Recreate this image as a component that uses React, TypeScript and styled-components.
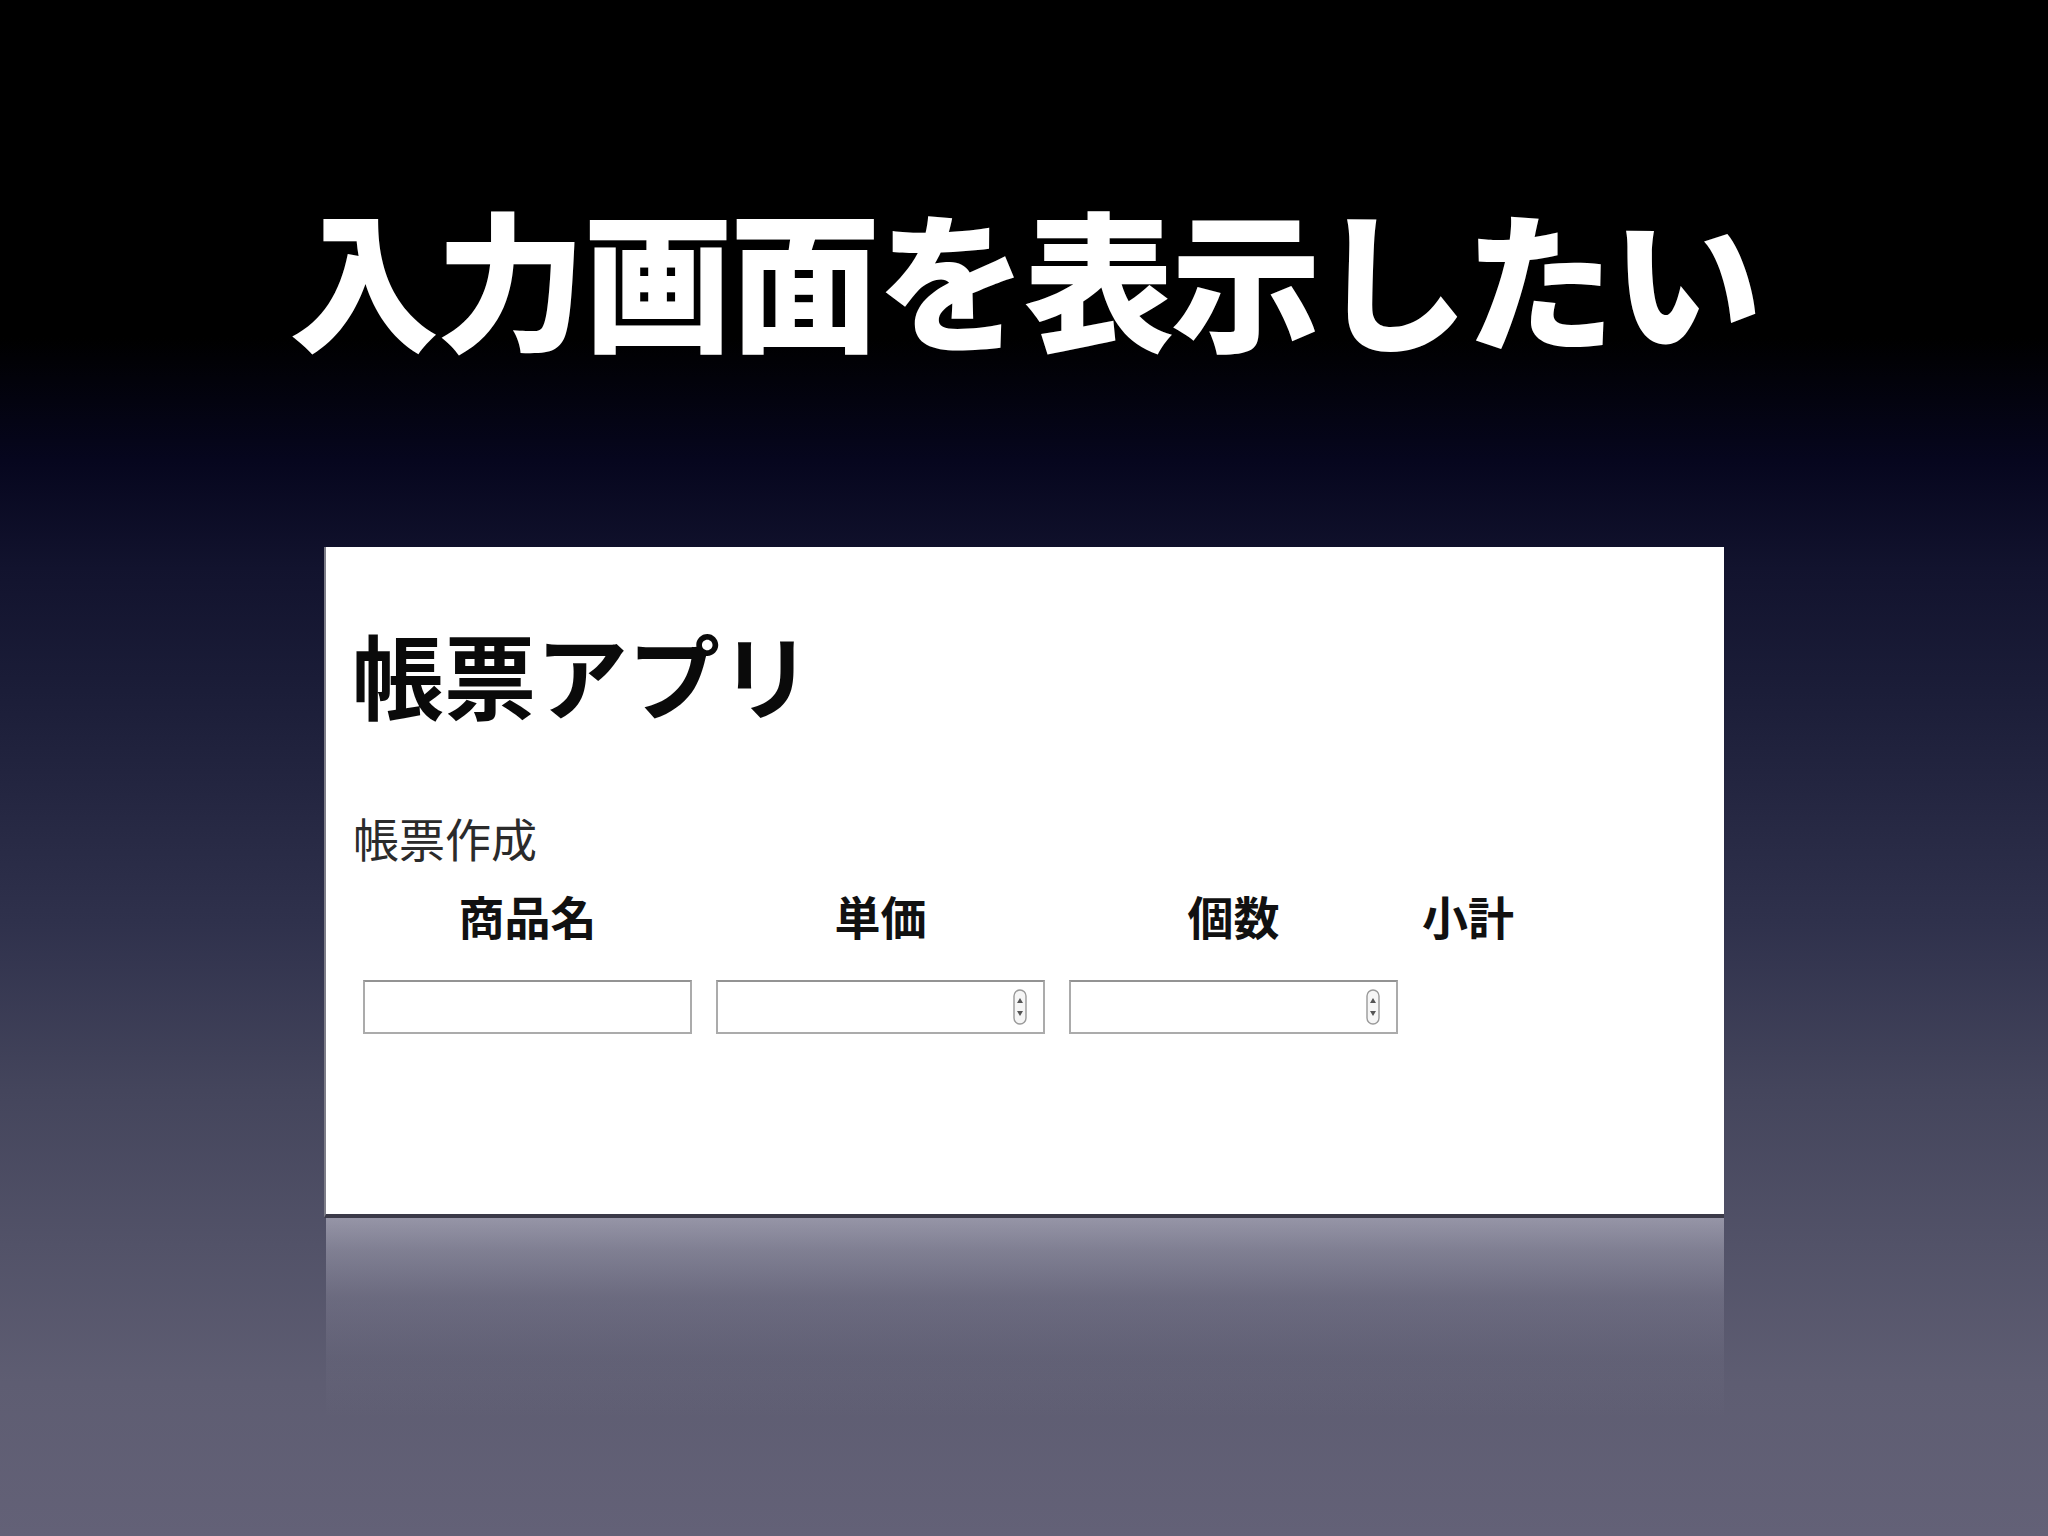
import React from "react";
import styled, { createGlobalStyle } from "styled-components";

const Global = createGlobalStyle`
  html, body {
    margin: 0;
    padding: 0;
  }
  body {
    width: 2048px;
    height: 1536px;
    overflow: hidden;
    background: linear-gradient(
      to bottom,
      #000000 0%,
      #000000 22%,
      #06061e 30%,
      #12132e 37%,
      #1b1d38 45%,
      #2f314c 60%,
      #44455c 71%,
      #525268 81%,
      #5e5d72 90%,
      #636177 100%
    );
    font-family: "Noto Sans CJK JP", "Noto Sans CJK SC", sans-serif;
  }
`;

const Slide = styled.main`
  width: 2048px;
  height: 1536px;
  display: flex;
  flex-direction: column;
  align-items: center;
`;

const Title = styled.h1`
  margin: 200px 0 0 0;
  font-size: 150px;
  line-height: 1;
  font-weight: 900;
  letter-spacing: -3px;
  color: #ffffff;
  white-space: nowrap;
`;

const Screen = styled.section`
  margin-top: 197px;
  width: 1400px;
  display: flex;
  flex-direction: column;
`;

const Page = styled.div`
  box-sizing: border-box;
  height: 671px;
  background: #ffffff;
  border-left: 2px solid #7d7d88;
  border-bottom: 4px solid #3b3a48;
  padding: 80px 0 0 26px;
  display: flex;
  flex-direction: column;
`;

const AppHeading = styled.h2`
  margin: 0;
  font-size: 92px;
  line-height: 1;
  font-weight: 700;
  color: #0a0a0a;
`;

const SubHeading = styled.div`
  margin-top: 95px;
  margin-left: 1px;
  font-size: 46px;
  line-height: 1;
  font-weight: 400;
  color: #2b2b2b;
`;

const Grid = styled.div`
  margin-top: 32px;
  padding-left: 11px;
  display: grid;
  grid-template-columns: 329px 329px 329px auto;
  column-gap: 24px;
  row-gap: 42px;
  justify-content: start;
`;

const Th = styled.div`
  text-align: center;
  font-size: 46px;
  line-height: 1;
  font-weight: 700;
  color: #111111;
`;

const FieldWrap = styled.div`
  position: relative;
  height: 54px;
`;

const Field = styled.input`
  box-sizing: border-box;
  width: 100%;
  height: 54px;
  margin: 0;
  border: 2px solid #ababab;
  border-top-color: #939393;
  background: #ffffff;
  outline: none;
  font-size: 28px;
  padding: 0 40px 0 8px;
  appearance: textfield;
  -moz-appearance: textfield;
  &::-webkit-outer-spin-button,
  &::-webkit-inner-spin-button {
    -webkit-appearance: none;
    margin: 0;
  }
`;

const Spinner = styled.svg`
  position: absolute;
  right: 18px;
  top: 9px;
  width: 14px;
  height: 36px;
  pointer-events: none;
`;

const Reflection = styled.div`
  margin-left: 2px;
  height: 200px;
  background: linear-gradient(
    to bottom,
    rgba(235, 233, 245, 0.45) 0%,
    rgba(220, 218, 232, 0.33) 16%,
    rgba(200, 198, 215, 0.18) 40%,
    rgba(190, 188, 205, 0.06) 70%,
    rgba(190, 188, 205, 0) 100%
  );
`;

const Stepper = () => (
  <Spinner viewBox="0 0 14 36">
    <rect x="1" y="1" width="12" height="34" rx="6" fill="#f6f6f6" stroke="#9a9a9a" strokeWidth="1.4" />
    <path d="M7 9 L10 14 L4 14 Z" fill="#555" />
    <path d="M7 27 L10 22 L4 22 Z" fill="#555" />
  </Spinner>
);

export default function App() {
  return (
    <>
      <Global />
      <Slide>
        <Title>入力画面を表示したい</Title>
        <Screen>
          <Page>
            <AppHeading>帳票アプリ</AppHeading>
            <SubHeading>帳票作成</SubHeading>
            <Grid>
              <Th>商品名</Th>
              <Th>単価</Th>
              <Th>個数</Th>
              <Th>小計</Th>
              <FieldWrap>
                <Field type="text" />
              </FieldWrap>
              <FieldWrap>
                <Field type="number" />
                <Stepper />
              </FieldWrap>
              <FieldWrap>
                <Field type="number" />
                <Stepper />
              </FieldWrap>
              <div />
            </Grid>
          </Page>
          <Reflection />
        </Screen>
      </Slide>
    </>
  );
}
